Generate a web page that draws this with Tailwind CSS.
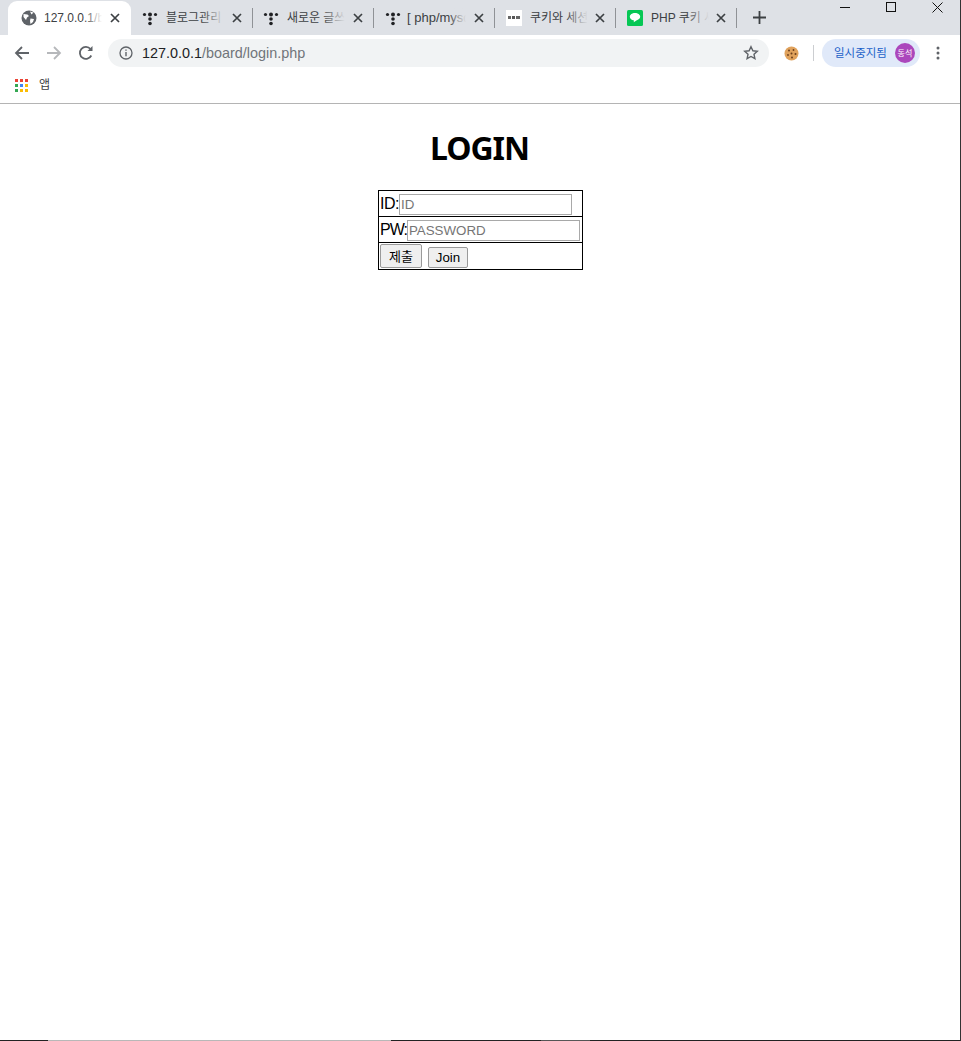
<!DOCTYPE html>
<html lang="ko">
<head>
  <meta charset="UTF-8">
  <title>LOGIN</title>
  <script src="https://cdn.jsdelivr.net/npm/@tailwindcss/browser@4"></script>
</head>
<body class="bg-white font-['Noto_Sans','Noto_Sans_CJK_KR',sans-serif]">
<div class="relative w-[961px] h-[1041px] overflow-hidden flex flex-col border-r border-[#333]">

  <!-- Tab strip -->
  <div class="h-[35px] bg-[#dee1e6] flex pl-[8px] text-[12px] text-[#3c4043] shrink-0">
    <div class="w-[123px] h-[34px] mt-[1px] bg-white rounded-t-[9px] flex items-center pl-[13px] relative">
      <svg width="16" height="16" viewBox="0 0 16 16" class="shrink-0"><circle cx="8" cy="8" r="7.500" fill="#5f6368"/><path d="M2.500 4l4 .5 1.500 1.500-2 1.500-1 2.500-2.500-3zM9 1.500l3.500 1-2 2zM9.500 8.500l3.500.5-1 3-2.500 2-.5-3z" fill="#fff"/></svg>
      <div class="relative ml-[7px] w-[58px] overflow-hidden whitespace-nowrap font-['Liberation_Sans',sans-serif]">127.0.0.1/board<div class="absolute inset-y-0 right-0 w-[18px] bg-linear-to-r from-white/0 to-white"></div></div>
      <svg width="10" height="10" viewBox="0 0 10 10" class="ml-[8px] shrink-0"><path d="M1 1l8 8M9 1l-8 8" stroke="#3c4043" stroke-width="1.700"/></svg>
    </div>

    <div class="w-[121px] h-[35px] flex items-center pl-[11px] relative">
      <svg width="16" height="16" viewBox="0 0 16 16" class="shrink-0"><g fill="#202124"><circle cx="2.500" cy="4.500" r="1.600"/><circle cx="8" cy="4.500" r="2"/><circle cx="13.500" cy="4.500" r="1.600"/><circle cx="8" cy="9" r="1.800"/><circle cx="8" cy="13.500" r="1.800"/></g></svg>
      <div class="relative ml-[8px] w-[58px] overflow-hidden whitespace-nowrap">블로그관리 홈<div class="absolute inset-y-0 right-0 w-[22px] bg-linear-to-r from-[#dee1e6]/0 to-[#dee1e6]"></div></div>
      <svg width="10" height="10" viewBox="0 0 10 10" class="ml-[8px] shrink-0"><path d="M1 1l8 8M9 1l-8 8" stroke="#3c4043" stroke-width="1.700"/></svg>
      <div class="absolute right-[-1px] top-[8px] w-px h-[20px] bg-[#8f9296]"></div>
    </div>

    <div class="w-[121px] h-[35px] flex items-center pl-[11px] relative">
      <svg width="16" height="16" viewBox="0 0 16 16" class="shrink-0"><g fill="#202124"><circle cx="2.500" cy="4.500" r="1.600"/><circle cx="8" cy="4.500" r="2"/><circle cx="13.500" cy="4.500" r="1.600"/><circle cx="8" cy="9" r="1.800"/><circle cx="8" cy="13.500" r="1.800"/></g></svg>
      <div class="relative ml-[8px] w-[58px] overflow-hidden whitespace-nowrap">새로운 글쓰기<div class="absolute inset-y-0 right-0 w-[22px] bg-linear-to-r from-[#dee1e6]/0 to-[#dee1e6]"></div></div>
      <svg width="10" height="10" viewBox="0 0 10 10" class="ml-[8px] shrink-0"><path d="M1 1l8 8M9 1l-8 8" stroke="#3c4043" stroke-width="1.700"/></svg>
      <div class="absolute right-[-1px] top-[8px] w-px h-[20px] bg-[#8f9296]"></div>
    </div>

    <div class="w-[121px] h-[35px] flex items-center pl-[12px] relative">
      <svg width="16" height="16" viewBox="0 0 16 16" class="shrink-0"><g fill="#202124"><circle cx="2.500" cy="4.500" r="1.600"/><circle cx="8" cy="4.500" r="2"/><circle cx="13.500" cy="4.500" r="1.600"/><circle cx="8" cy="9" r="1.800"/><circle cx="8" cy="13.500" r="1.800"/></g></svg>
      <div class="relative ml-[6px] w-[59px] overflow-hidden whitespace-nowrap text-[13px] font-['Liberation_Sans',sans-serif]">[ php/mysql<div class="absolute inset-y-0 right-0 w-[18px] bg-linear-to-r from-[#dee1e6]/0 to-[#dee1e6]"></div></div>
      <svg width="10" height="10" viewBox="0 0 10 10" class="ml-[8px] shrink-0"><path d="M1 1l8 8M9 1l-8 8" stroke="#3c4043" stroke-width="1.700"/></svg>
      <div class="absolute right-[-1px] top-[8px] w-px h-[20px] bg-[#8f9296]"></div>
    </div>

    <div class="w-[121px] h-[35px] flex items-center pl-[12px] relative">
      <div class="w-[16px] h-[16px] bg-white shrink-0 flex items-center justify-center gap-px">
        <div class="w-[3px] h-[3px] bg-[#666]"></div><div class="w-[3px] h-[3px] bg-[#555]"></div><div class="w-[4px] h-[3px] bg-[#666]"></div>
      </div>
      <div class="relative ml-[8px] w-[58px] overflow-hidden whitespace-nowrap">쿠키와 세션<div class="absolute inset-y-0 right-0 w-[22px] bg-linear-to-r from-[#dee1e6]/0 to-[#dee1e6]"></div></div>
      <svg width="10" height="10" viewBox="0 0 10 10" class="ml-[7px] shrink-0"><path d="M1 1l8 8M9 1l-8 8" stroke="#3c4043" stroke-width="1.700"/></svg>
      <div class="absolute right-[-1px] top-[8px] w-px h-[20px] bg-[#8f9296]"></div>
    </div>

    <div class="w-[121px] h-[35px] flex items-center pl-[12px] relative">
      <svg width="16" height="16" viewBox="0 0 16 16" class="shrink-0"><rect width="16" height="16" rx="1.500" fill="#06c755"/><path d="M8 3c-3 0-5.200 1.700-5.200 3.800 0 1.900 1.800 3.400 4.200 3.700l-.3 1.700 2.700-1.800c2-.6 3.800-1.900 3.800-3.600C13.200 4.700 11 3 8 3z" fill="#fff"/></svg>
      <div class="relative ml-[8px] w-[58px] overflow-hidden whitespace-nowrap font-['Liberation_Sans','Noto_Sans_CJK_KR',sans-serif]">PHP 쿠키 세션<div class="absolute inset-y-0 right-0 w-[22px] bg-linear-to-r from-[#dee1e6]/0 to-[#dee1e6]"></div></div>
      <svg width="10" height="10" viewBox="0 0 10 10" class="ml-[7px] shrink-0"><path d="M1 1l8 8M9 1l-8 8" stroke="#3c4043" stroke-width="1.700"/></svg>
      <div class="absolute right-[-1px] top-[8px] w-px h-[20px] bg-[#8f9296]"></div>
    </div>

    <div class="h-[35px] flex items-center pl-[17px]">
      <svg width="13" height="13" viewBox="0 0 13 13"><path d="M6.500 0v13M0 6.500h13" stroke="#3c4043" stroke-width="1.800"/></svg>
    </div>
  </div>

  <!-- Window buttons -->
  <svg class="absolute left-[840px] top-0" width="106" height="14" viewBox="0 0 106 14" fill="none" stroke="#111">
    <path d="M0 7.500h10"/>
    <rect x="46.500" y="2.500" width="9" height="9"/>
    <path d="M92.500 2.500l10 10M102.500 2.500l-10 10"/>
  </svg>

  <!-- Toolbar -->
  <div class="h-[32px] mt-[2px] flex items-center shrink-0 pl-[14px] pr-[16px]">
    <svg width="16" height="16" viewBox="0 0 16 16" fill="none" stroke="#5f6368" stroke-width="1.800"><path d="M15 8H2M8 2L2 8l6 6"/></svg>
    <svg width="16" height="16" viewBox="0 0 16 16" fill="none" stroke="#b6b8bb" stroke-width="1.800" class="ml-[16px]"><path d="M1 8h13M8 2l6 6-6 6"/></svg>
    <svg width="16" height="16" viewBox="0 0 16 16" fill="none" stroke="#5f6368" stroke-width="1.800" class="ml-[16px]"><path d="M13.300 10.500A6 6 0 1 1 12.500 4"/><path d="M14.500 1v5h-5z" fill="#5f6368" stroke="none"/></svg>

    <div class="ml-[14px] w-[661px] h-[28px] bg-[#f1f3f4] rounded-full flex items-center pl-[11px] pr-[10px]">
      <svg width="14" height="14" viewBox="0 0 14 14" fill="none" class="shrink-0"><circle cx="7" cy="7" r="6" stroke="#5f6368" stroke-width="1.300"/><path d="M7 6v4.200M7 3.500v1.300" stroke="#5f6368" stroke-width="1.400"/></svg>
      <div class="ml-[9px] text-[14.4px] leading-none whitespace-nowrap text-[#70757a] font-['Liberation_Sans',sans-serif]"><span class="text-[#202124]">127.0.0.1</span>/board/login.php</div>
      <svg width="16" height="16" viewBox="0 0 16 16" fill="none" stroke="#5f6368" stroke-width="1.400" class="ml-auto"><path d="M8 1.700l1.900 4.100 4.400.5-3.300 3 .9 4.400L8 11.500l-3.900 2.200.9-4.400-3.300-3 4.400-.5z"/></svg>
    </div>

    <svg width="15" height="15" viewBox="0 0 15 15" class="ml-[15px] shrink-0"><circle cx="7.500" cy="7.500" r="7" fill="#e0a25c"/><g fill="#6b3f1d"><circle cx="5" cy="4.500" r="1"/><circle cx="9.500" cy="4" r=".9"/><circle cx="7.500" cy="7.500" r="1"/><circle cx="11.500" cy="8" r="1"/><circle cx="4" cy="9" r=".9"/><circle cx="8" cy="11.500" r="1"/></g></svg>
    <div class="ml-[14px] w-px h-[16px] bg-[#ccced1]"></div>
    <div class="ml-[8px] w-[98px] h-[28px] bg-[#e0e9f9] rounded-full flex items-center pl-[12px] text-[11.5px] text-[#1a5fc8] whitespace-nowrap">
      일시중지됨
      <div class="ml-[8px] w-[20px] h-[20px] rounded-full bg-[#ab47bc] text-white text-[8px] flex items-center justify-center">동석</div>
    </div>
    <svg width="4" height="14" viewBox="0 0 4 14" fill="#5f6368" class="ml-[16px] shrink-0"><circle cx="2" cy="2" r="1.500"/><circle cx="2" cy="7" r="1.500"/><circle cx="2" cy="12" r="1.500"/></svg>
  </div>

  <!-- Bookmarks bar -->
  <div class="h-[35px] flex items-center shrink-0 pl-[15px] pb-[2px] border-b border-[#b4b4b4] text-[12px] text-[#3c4043]">
    <div class="grid grid-cols-3 gap-[2px] w-[13px]">
      <div class="w-[3px] h-[3px] bg-[#ea4335]"></div><div class="w-[3px] h-[3px] bg-[#ea4335]"></div><div class="w-[3px] h-[3px] bg-[#ea4335]"></div>
      <div class="w-[3px] h-[3px] bg-[#34a853]"></div><div class="w-[3px] h-[3px] bg-[#4285f4]"></div><div class="w-[3px] h-[3px] bg-[#fbbc05]"></div>
      <div class="w-[3px] h-[3px] bg-[#34a853]"></div><div class="w-[3px] h-[3px] bg-[#fbbc05]"></div><div class="w-[3px] h-[3px] bg-[#fbbc05]"></div>
    </div>
    <span class="ml-[11px]">앱</span>
  </div>

  <!-- Page -->
  <div class="flex-1 flex flex-col items-center pt-[22px] pl-px">
    <h1 class="mr-[2px] text-[32px] leading-[44px] font-bold tracking-[-1px] text-black">LOGIN</h1>
    <table class="mt-[20px] w-[205px] border-collapse border border-black text-[16px] text-black font-['Liberation_Sans',sans-serif]">
      <tbody>
        <tr class="h-[26px] border border-black">
          <td class="p-0 pl-px pt-[2px] whitespace-nowrap leading-none"><span class="tracking-[-0.5px]">ID:</span><input type="text" placeholder="ID" class="w-[173px] h-[21px] align-middle border border-[#a9a9a9] px-px text-[13.33px] tracking-normal placeholder:text-[#757575]"></td>
        </tr>
        <tr class="h-[26px] border border-black">
          <td class="p-0 pl-px pt-[2px] whitespace-nowrap leading-none"><span class="tracking-[-1px]">PW:</span><input type="password" placeholder="PASSWORD" class="w-[173px] h-[21px] align-middle border border-[#a9a9a9] px-px text-[13.33px] tracking-normal placeholder:text-[#757575]"></td>
        </tr>
        <tr class="h-[27px]">
          <td class="p-0 pl-px">
            <div class="flex items-end gap-[6px]">
              <button class="w-[42px] h-[24px] bg-[#efefef] border border-[#9a9a9a] rounded-[2px] text-[13px] font-['Noto_Sans_CJK_KR',sans-serif]">제출</button>
              <button class="w-[40px] h-[21px] bg-[#efefef] border border-[#9a9a9a] rounded-[2px] text-[13.3px] leading-none">Join</button>
            </div>
          </td>
        </tr>
      </tbody>
    </table>
  </div>

  <!-- Window bottom edge -->
  <div class="flex h-px shrink-0">
    <div class="w-[48px] bg-[#222]"></div>
    <div class="w-[343px] bg-[#b8b8b8]"></div>
    <div class="w-[150px] bg-[#222]"></div>
    <div class="w-[49px] bg-[#555]"></div>
    <div class="flex-1 bg-[#222]"></div>
  </div>
</div>
</body>
</html>
